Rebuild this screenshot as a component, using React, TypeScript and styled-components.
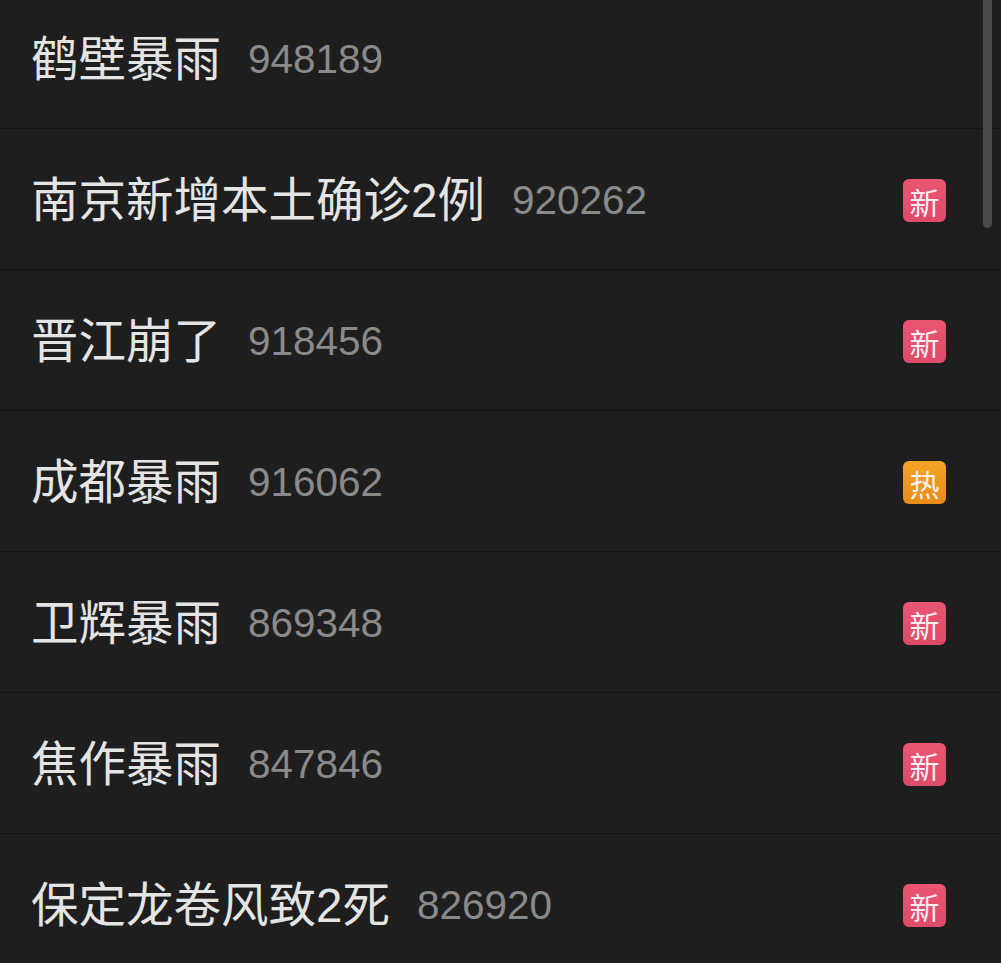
import React from "react";
import styled, { createGlobalStyle } from "styled-components";

const Global = createGlobalStyle`
  html, body { margin: 0; padding: 0; background: #1e1e1e; }
  #root { width: 1001px; height: 963px; }
`;

const Screen = styled.div`
  position: relative;
  width: 1001px;
  height: 963px;
  overflow: hidden;
  background: #1e1e1e;
`;

const List = styled.ul`
  list-style: none;
  margin: -12px 0 0 0;
  padding: 0;
`;

const Row = styled.li`
  display: flex;
  align-items: center;
  box-sizing: content-box;
  height: 137px;
  padding: 3px 55px 0 31px;
  border-bottom: 1px solid #141414;
`;

const Title = styled.span`
  font-family: "Liberation Sans", "Noto Sans CJK SC", sans-serif;
  font-size: 47.5px;
  color: #e4e4e4;
  line-height: 1;
`;

const Count = styled.span`
  font-family: "Liberation Sans", "Noto Sans", sans-serif;
  font-size: 40.5px;
  color: #8a8a8a;
  margin-left: 27px;
  line-height: 1;
  flex: 1;
`;

const Badge = styled.span<{ $kind: "new" | "hot" }>`
  width: 43px;
  height: 43px;
  border-radius: 6px;
  display: flex;
  align-items: center;
  justify-content: center;
  font-family: "Noto Sans CJK SC", sans-serif;
  font-size: 30px;
  line-height: 1;
  color: #fbeef0;
  background: ${(p) =>
    p.$kind === "new"
      ? "linear-gradient(180deg, #ea5573 0%, #de4a69 100%)"
      : "linear-gradient(180deg, #f3a526 0%, #e98b17 100%)"};
`;

const Scrollbar = styled.div`
  position: absolute;
  top: 0;
  left: 983px;
  width: 9px;
  height: 228px;
  border-radius: 0 0 5px 5px;
  background: #4b4b4b;
`;

type Item = { title: string; count: string; tag?: "new" | "hot" };

const items: Item[] = [
  { title: "鹤壁暴雨", count: "948189" },
  { title: "南京新增本土确诊2例", count: "920262", tag: "new" },
  { title: "晋江崩了", count: "918456", tag: "new" },
  { title: "成都暴雨", count: "916062", tag: "hot" },
  { title: "卫辉暴雨", count: "869348", tag: "new" },
  { title: "焦作暴雨", count: "847846", tag: "new" },
  { title: "保定龙卷风致2死", count: "826920", tag: "new" },
];

export default function App() {
  return (
    <Screen>
      <Global />
      <List>
        {items.map((it) => (
          <Row key={it.title}>
            <Title>{it.title}</Title>
            <Count>{it.count}</Count>
            {it.tag && <Badge $kind={it.tag}>{it.tag === "new" ? "新" : "热"}</Badge>}
          </Row>
        ))}
      </List>
      <Scrollbar />
    </Screen>
  );
}
